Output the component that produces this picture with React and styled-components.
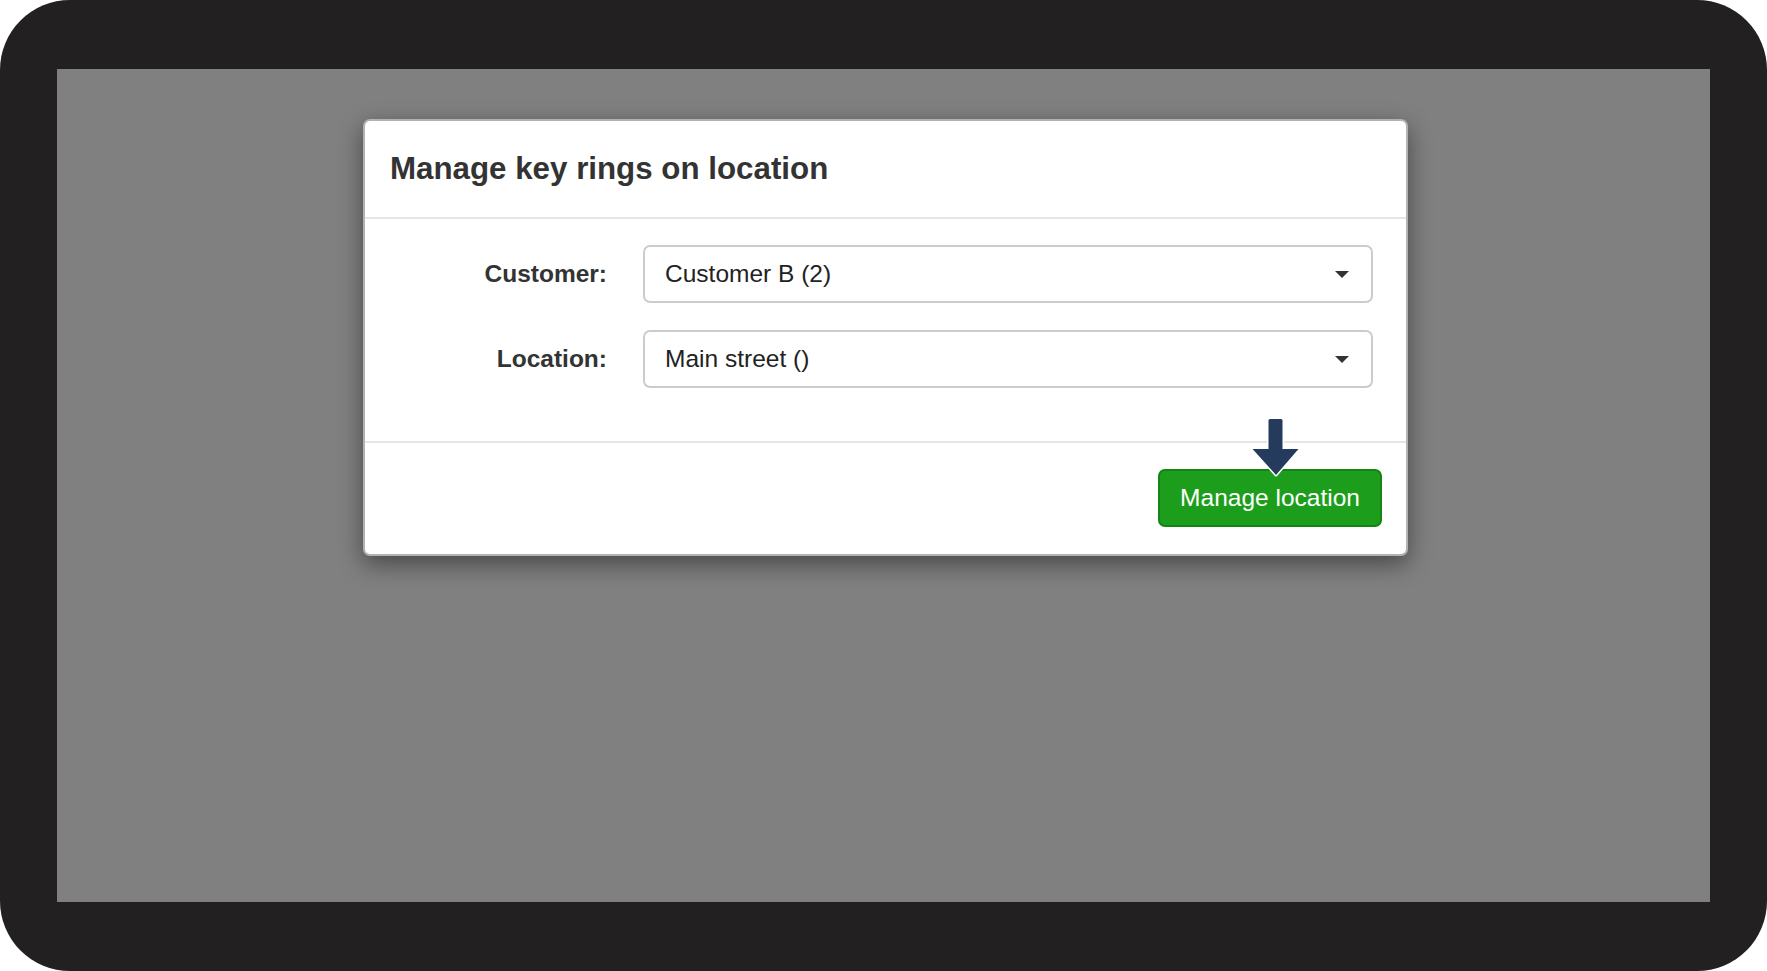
import React from "react";
import styled, { createGlobalStyle } from "styled-components";

const GlobalStyle = createGlobalStyle`
  html, body {
    margin: 0;
    padding: 0;
    background: #ffffff;
  }
  * {
    box-sizing: border-box;
  }
`;

const Frame = styled.div`
  width: 1767px;
  height: 971px;
  background: #222021;
  border-radius: 70px;
  padding: 69px 57px;
  font-family: "Liberation Sans", Arial, sans-serif;
`;

const Backdrop = styled.div`
  width: 1653px;
  height: 833px;
  background: #808080;
  padding: 50px 0 0 306px;
`;

const Modal = styled.div`
  width: 1045px;
  background: #fff;
  border: 2px solid rgba(0, 0, 0, 0.3);
  border-radius: 7px;
  box-shadow: 0 8px 25px rgba(0, 0, 0, 0.45);
`;

const Header = styled.div`
  padding: 26px 24px 26px 25px;
  border-bottom: 2px solid #e5e5e5;
`;

const Title = styled.h4`
  margin: 0;
  font-size: 31.3px;
  line-height: 44px;
  font-weight: bold;
  color: #333;
`;

const Body = styled.div`
  padding: 26px 33px 53px 40px;
  display: flex;
  flex-direction: column;
  gap: 27px;
`;

const Row = styled.div`
  display: grid;
  grid-template-columns: 202px 1fr;
  column-gap: 36px;
  align-items: center;
`;

const Label = styled.label`
  text-align: right;
  font-size: 24.5px;
  font-weight: bold;
  color: #333;
`;

const Select = styled.div`
  height: 58px;
  border: 2px solid #cccccc;
  border-radius: 7px;
  display: flex;
  align-items: center;
  justify-content: space-between;
  padding: 0 22px 0 20px;
  font-size: 24.5px;
  color: #222;
  background: #fff;
`;

const Caret = styled.span`
  width: 0;
  height: 0;
  border-left: 7px solid transparent;
  border-right: 7px solid transparent;
  border-top: 7px solid #333;
`;

const Footer = styled.div`
  border-top: 2px solid #e5e5e5;
  padding: 26px 24px 27px;
  display: flex;
  justify-content: flex-end;
`;

const ButtonWrap = styled.div`
  position: relative;
`;

const Button = styled.button`
  width: 224px;
  height: 58px;
  background: #1c9e1c;
  border: 2px solid #148414;
  border-radius: 7px;
  color: #fff;
  font-family: "Liberation Sans", Arial, sans-serif;
  font-size: 24.5px;
  padding: 0;
  cursor: pointer;
`;

const Arrow = styled.svg`
  position: absolute;
  left: 93px;
  top: -51px;
  overflow: visible;
`;

function Field({ label, value }) {
  return (
    <Row>
      <Label>{label}</Label>
      <Select>
        <span>{value}</span>
        <Caret />
      </Select>
    </Row>
  );
}

export default function App() {
  return (
    <>
      <GlobalStyle />
      <Frame>
        <Backdrop>
          <Modal>
            <Header>
              <Title>Manage key rings on location</Title>
            </Header>
            <Body>
              <Field label="Customer:" value="Customer B (2)" />
              <Field label="Location:" value="Main street ()" />
            </Body>
            <Footer>
              <ButtonWrap>
                <Button>Manage location</Button>
                <Arrow width="50" height="60" viewBox="0 0 50 60">
                  <path
                    d="M19,1 h11 q1.5,0 1.5,1.5 V31 h16 L25,57 L1.5,31 h16 V2.5 q0,-1.5 1.5,-1.5 z"
                    fill="#243b5e"
                    stroke="#ffffff"
                    strokeWidth="3"
                    strokeLinejoin="round"
                    paintOrder="stroke"
                  />
                </Arrow>
              </ButtonWrap>
            </Footer>
          </Modal>
        </Backdrop>
      </Frame>
    </>
  );
}
